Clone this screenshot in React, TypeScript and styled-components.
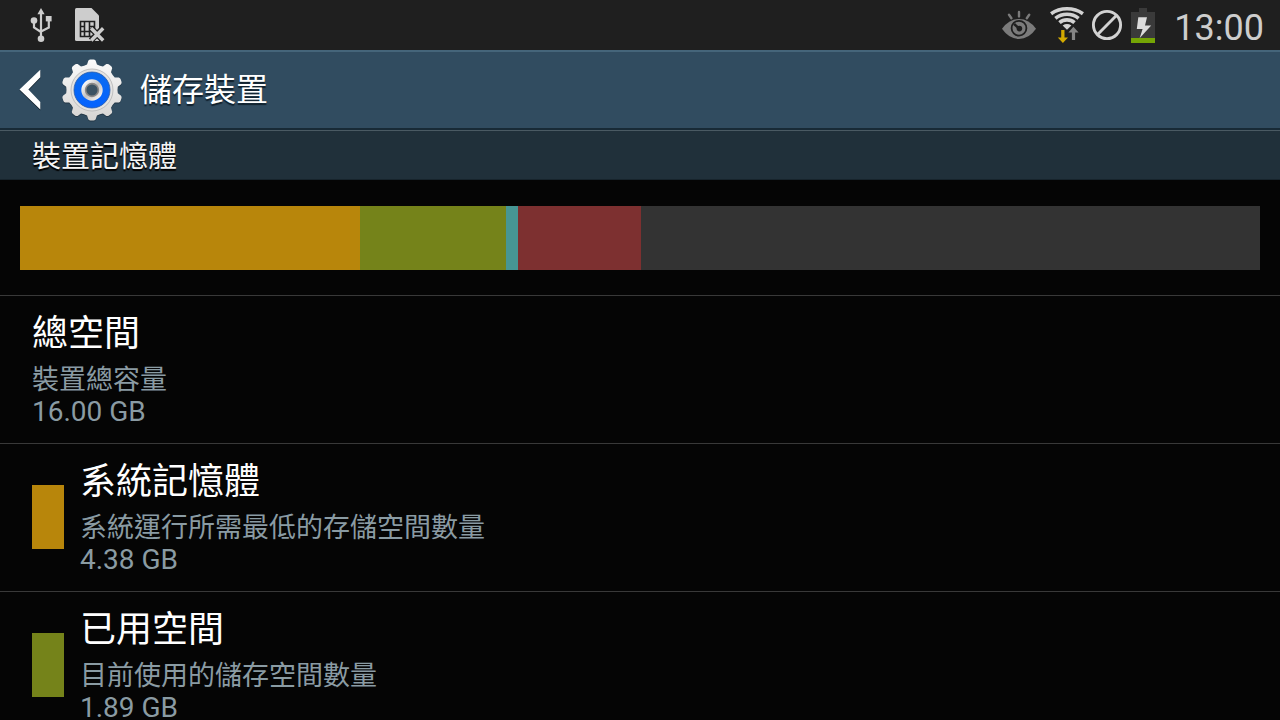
import React from "react";
import styled, { createGlobalStyle } from "styled-components";

const GlobalStyle = createGlobalStyle`
  *, *::before, *::after { box-sizing: border-box; }
  body {
    margin: 0;
    background: #050505;
    color: #fafafa;
    font-family: Roboto, "Noto Sans CJK TC", sans-serif;
  }
  h1, h2, h3, p, ul { margin: 0; padding: 0; font-weight: 400; }
`;

const Screen = styled.div`
  display: flex;
  flex-direction: column;
  height: 100vh;
  overflow: hidden;
`;

const StatusBar = styled.div`
  display: flex;
  flex: none;
  align-items: center;
  justify-content: space-between;
  height: 50px;
  padding: 0 16px 0 28px;
  background: #1f1f1f;
`;

const StatusGroup = styled.div<{ $gap: number }>`
  display: flex;
  align-items: center;
  gap: ${(p) => p.$gap}px;
`;

const StatusIcon = styled.svg`
  display: block;
  flex: none;
  height: 50px;
`;

const Clock = styled.time`
  margin-left: 13px;
  padding-top: 6px;
  color: #cdcdcd;
  font-size: 36px;
  line-height: 48px;
`;

const ActionBar = styled.header`
  display: flex;
  flex: none;
  align-items: center;
  height: 80px;
  padding: 0 16px;
  background: #314c60;
  border-top: 2px solid #45657a;
  border-bottom: 2px solid #182a36;
`;

const BackButton = styled.button`
  display: flex;
  align-items: center;
  gap: 16px;
  padding: 0;
  border: 0;
  background: none;
  cursor: pointer;
`;

const Title = styled.h1`
  margin-left: 16px;
  color: #ffffff;
  font-size: 32px;
  line-height: 48px;
  text-shadow: 0 2px 1px #10202c;
`;

const SectionTitle = styled.h2`
  flex: none;
  height: 50px;
  padding: 0 32px;
  background: #20303a;
  border-top: 1px solid #4a5a63;
  border-bottom: 1px solid #17242c;
  color: #f4f4f4;
  font-size: 29px;
  line-height: 52px;
  text-shadow: 0 2px 1px #000000;
`;

const Usage = styled.div`
  flex: none;
  padding: 26px 20px 25px;
`;

const UsageBar = styled.div`
  display: flex;
  height: 64px;
  background: #333333;
`;

const Segment = styled.div<{ $share: number; $color: string }>`
  flex: none;
  width: ${(p) => p.$share}%;
  background: ${(p) => p.$color};
`;

const List = styled.ul`
  flex: 1;
  min-height: 0;
  overflow: hidden;
  list-style: none;
`;

const Row = styled.li`
  display: flex;
  align-items: center;
  gap: 16px;
  height: 148px;
  padding: 0 32px 1px;
  border-top: 1px solid #393939;
`;

const Swatch = styled.span<{ $color: string }>`
  flex: none;
  width: 32px;
  height: 64px;
  background: ${(p) => p.$color};
`;

const RowTitle = styled.h3`
  color: #ffffff;
  font-size: 36px;
  line-height: 48px;
`;

const Summary = styled.p`
  margin-top: 6px;
  color: #8a9ba3;
  font-size: 27px;
  line-height: 32px;
`;

const Size = styled.p`
  color: #8a9ba3;
  font-size: 28px;
  line-height: 32px;
`;

const TOTAL_MB = 16000;

const segments = [
  { name: "系統記憶體", mb: 4387, color: "#b8860b" },
  { name: "已用空間", mb: 1884, color: "#75831a" },
  { name: "快取資料", mb: 155, color: "#479694" },
  { name: "其他檔案", mb: 1587, color: "#7d3030" },
];

const rows = [
  { title: "總空間", summary: "裝置總容量", size: "16.00 GB" },
  { title: "系統記憶體", summary: "系統運行所需最低的存儲空間數量", size: "4.38 GB", color: "#b8860b" },
  { title: "已用空間", summary: "目前使用的儲存空間數量", size: "1.89 GB", color: "#75831a" },
];

const UsbIcon = () => (
  <StatusIcon width="26" viewBox="28 0 26 50" aria-hidden="true">
    <g fill="none" stroke="#cdcdcd" strokeWidth="2.2">
      <path d="M41 12V38M34 21V27.5L41 32M48.8 20V27.5L41 31.5" />
    </g>
    <g fill="#cdcdcd">
      <path d="M41 8L37.4 14.2H44.6Z" />
      <circle cx="34" cy="20.6" r="3.3" />
      <rect x="45.8" y="16" width="5.8" height="5.4" />
      <circle cx="41" cy="38.8" r="3.3" />
    </g>
  </StatusIcon>
);

const SimIcon = () => (
  <StatusIcon width="32" viewBox="74 0 32 50" aria-hidden="true">
    <path d="M75 9.5Q75 8 76.5 8H91.5L99 15.5V41H76.5Q75 41 75 39.5Z" fill="#cdcdcd" />
    <path
      d="M80.5 21.5H94.5V36.5H80.5ZM84.5 21.5V36.5M89.5 21.5V36.5M80.5 26.5H84.5M80.5 31.5H84.5M89.5 26.5H94.5M84.5 31.5H94.5"
      fill="none"
      stroke="#1f1f1f"
      strokeWidth="1.6"
    />
    <path d="M91 28L103 40.5M103 28L91 40.5" stroke="#1f1f1f" strokeWidth="6" />
    <path d="M91.2 28.2L103.2 40.5M103.2 28.2L91.2 40.5" stroke="#cdcdcd" strokeWidth="3.4" />
  </StatusIcon>
);

const SmartStayIcon = () => (
  <StatusIcon width="42" viewBox="1001 0 42 50" aria-hidden="true">
    <path d="M1002 28.8Q1009 19 1019 19T1036 28.8Q1029 39 1019 39T1002 28.8Z" fill="#7b7b7b" />
    <circle cx="1019" cy="28.2" r="7.4" fill="#7b7b7b" stroke="#1f1f1f" strokeWidth="1.8" />
    <circle cx="1019.4" cy="28.6" r="2.8" fill="#1f1f1f" />
    <path d="M1014.2 24L1019 28.5" stroke="#1f1f1f" strokeWidth="2.4" />
    <path
      d="M1019 12V16.4M1009 14.8L1011.4 18.2M1029.2 14.8L1026.8 18.2"
      stroke="#7b7b7b"
      strokeWidth="2.4"
      strokeLinecap="round"
    />
  </StatusIcon>
);

const WifiIcon = () => (
  <StatusIcon width="36" viewBox="1049 0 36 50" aria-hidden="true">
    <g fill="none" stroke="#d2d2d2" strokeWidth="3.6">
      <path d="M1051.1 13.8Q1058 8.8 1067 8.8T1082.9 13.8" />
      <path d="M1055.4 18.3Q1060.4 14.3 1067 14.3T1078.6 18.3" />
      <path d="M1059.5 22.7Q1062.6 19.9 1067 19.9T1074.5 22.7" />
    </g>
    <path d="M1062.6 25.4Q1067 22.6 1071.4 25.4L1067 29.8Z" fill="#d2d2d2" />
    <path d="M1061.2 30H1064.5V37.5H1068L1062.9 43L1057.8 37.5H1061.2Z" fill="#d3aa00" />
    <path d="M1073.4 26.7L1078.6 32.6H1075.1V40H1071.9V32.6H1068.4Z" fill="#858585" />
  </StatusIcon>
);

const BlockedIcon = () => (
  <StatusIcon width="34" viewBox="1091 0 34 50" aria-hidden="true">
    <g fill="none" stroke="#d2d2d2" strokeWidth="2.9">
      <circle cx="1107" cy="25" r="13.6" />
      <path d="M1097.6 34.6L1116.4 15.4" />
    </g>
  </StatusIcon>
);

const BatteryIcon = () => (
  <StatusIcon width="24" viewBox="1131 0 24 50" aria-hidden="true">
    <path d="M1139 8H1147V12H1155V43H1131V12H1139Z" fill="#3a3a3a" />
    <rect x="1131" y="38" width="24" height="5" fill="#75a505" />
    <path d="M1138.3 17.3H1147L1145 25.6H1151.2L1139.6 38.3L1142.6 29H1136.8Z" fill="#dcdcdc" />
  </StatusIcon>
);

const BackIcon = () => (
  <svg width="28" height="44" viewBox="16 68 28 44" aria-hidden="true">
    <path d="M40.3 70.8V78.2L28.4 90.6L40.3 103V110.4L19.5 90.6Z" fill="#12202b" />
    <path d="M40.3 69.8V77.2L28.4 89.6L40.3 102V109.4L19.5 89.6Z" fill="#ffffff" />
  </svg>
);

// Outline of a ten-toothed cog, with each tooth as a narrowing trapezoid.
const gearPath = (() => {
  const teeth = 10;
  const point = (radius: number, degrees: number) => {
    const a = ((degrees - 90) * Math.PI) / 180;
    return `${(32 + radius * Math.cos(a)).toFixed(2)} ${(32 + radius * Math.sin(a)).toFixed(2)}`;
  };
  let d = "";
  for (let i = 0; i < teeth; i += 1) {
    const c = (360 / teeth) * i;
    d += `${i ? "L" : "M"}${point(26, c - 11)}L${point(29.6, c - 7)}Q${point(30.6, c - 5)} ${point(30.6, c - 3)}`;
    d += `L${point(30.6, c + 3)}Q${point(30.6, c + 5)} ${point(29.6, c + 7)}L${point(26, c + 11)}`;
    d += `Q${point(25.2, c + 18)} ${point(26, c + 25)}`;
  }
  return `${d}Z`;
})();

const GearIcon = () => (
  <svg width="64" height="64" viewBox="0 0 64 64" aria-hidden="true">
    <defs>
      <linearGradient id="metal" x1="0" y1="0" x2="0" y2="1">
        <stop offset="0" stopColor="#fbfbfb" />
        <stop offset="1" stopColor="#d6d4d2" />
      </linearGradient>
      <linearGradient id="blue" x1="0" y1="0" x2="0" y2="1">
        <stop offset="0" stopColor="#0a6cf0" />
        <stop offset="1" stopColor="#0462ff" />
      </linearGradient>
      <linearGradient id="ring" x1="0" y1="0" x2="1" y2="1">
        <stop offset="0" stopColor="#ffffff" />
        <stop offset="0.5" stopColor="#c4c2c0" />
        <stop offset="1" stopColor="#f4f4f4" />
      </linearGradient>
    </defs>
    <path d={gearPath} fill="#1b2a36" opacity="0.6" transform="translate(0 1)" />
    <path d={gearPath} fill="url(#metal)" />
    <circle cx="32" cy="32" r="21" fill="#e4e3e2" stroke="#b4b4b4" strokeWidth="0.8" />
    <circle cx="32" cy="32" r="18" fill="url(#blue)" stroke="#2a5ca8" strokeWidth="0.8" />
    <circle cx="32" cy="32" r="8.2" fill="#314c60" stroke="url(#ring)" strokeWidth="5" />
    <circle cx="32" cy="32" r="6.4" fill="#3c5363" stroke="#8a8886" strokeWidth="1.6" />
  </svg>
);

export default function App() {
  return (
    <>
      <GlobalStyle />
      <Screen>
        <StatusBar>
          <StatusGroup $gap={20}>
            <UsbIcon />
            <SimIcon />
          </StatusGroup>
          <StatusGroup $gap={6}>
            <SmartStayIcon />
            <WifiIcon />
            <BlockedIcon />
            <BatteryIcon />
            <Clock>13:00</Clock>
          </StatusGroup>
        </StatusBar>
        <ActionBar>
          <BackButton type="button" aria-label="返回">
            <BackIcon />
            <GearIcon />
          </BackButton>
          <Title>儲存裝置</Title>
        </ActionBar>
        <SectionTitle>裝置記憶體</SectionTitle>
        <Usage>
          <UsageBar>
            {segments.map((s) => (
              <Segment key={s.name} $share={(s.mb / TOTAL_MB) * 100} $color={s.color} />
            ))}
          </UsageBar>
        </Usage>
        <List>
          {rows.map((row) => (
            <Row key={row.title}>
              {row.color && <Swatch $color={row.color} />}
              <div>
                <RowTitle>{row.title}</RowTitle>
                <Summary>{row.summary}</Summary>
                <Size>{row.size}</Size>
              </div>
            </Row>
          ))}
        </List>
      </Screen>
    </>
  );
}
